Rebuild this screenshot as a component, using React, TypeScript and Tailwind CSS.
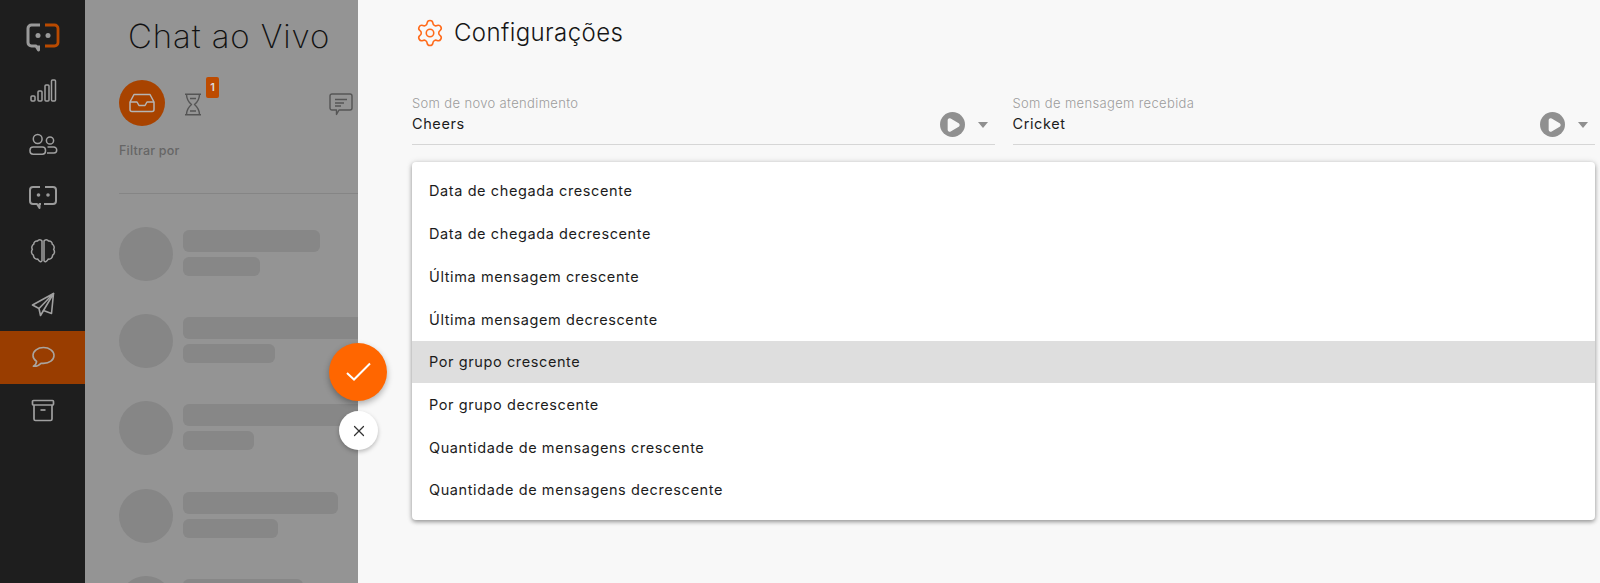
import { Settings, X, Play } from "lucide-react";

const font = "[font-family:Inter,'Liberation_Sans',sans-serif]";

const Logo = ({ color = "#9a9a9a", accent = "#b94a00" }: { color?: string; accent?: string }) => (
  <svg width="34" height="30" viewBox="0 0 34 30" fill="none">
    <path d="M14 2H5.5A3.5 3.5 0 0 0 2 5.5V19.5A3.5 3.5 0 0 0 5.5 23H10L12.5 27V22.5" stroke={color} strokeWidth="3" strokeLinejoin="round" />
    <path d="M19 2H28.5A3.5 3.5 0 0 1 32 5.5V19.5A3.5 3.5 0 0 1 28.5 23H19" stroke={accent} strokeWidth="2.8" />
    <circle cx="12" cy="12.5" r="2.5" fill={color} />
    <circle cx="22" cy="12.5" r="2.5" fill={color} />
  </svg>
);

const Signal = () => (
  <svg width="28" height="26" viewBox="0 0 28 26" fill="none" stroke="#a0a0a0" strokeWidth="1.5">
    <rect x="2" y="18" width="4" height="5" rx="1" />
    <rect x="9" y="13" width="4" height="10" rx="1" />
    <rect x="16" y="7" width="4" height="16" rx="1" />
    <rect x="22.5" y="2" width="4" height="21" rx="1" />
  </svg>
);

const People = () => (
  <svg width="30" height="24" viewBox="0 0 30 24" fill="none" stroke="#a0a0a0" strokeWidth="1.5">
    <circle cx="9.7" cy="7" r="4.4" />
    <rect x="2" y="15" width="15.5" height="7.2" rx="3.2" />
    <circle cx="22" cy="8.5" r="3.6" />
    <path d="M19.5 15H25.5A3 3 0 0 1 28.7 18C28.7 20 27.5 21 26 21H19" />
  </svg>
);

const Bot = () => (
  <svg width="30" height="25" viewBox="0 0 30 25" fill="none">
    <path d="M12 2H5A3 3 0 0 0 2 5V16A3 3 0 0 0 5 19H9L11.5 23V19H13" stroke="#9a9a9a" strokeWidth="2" strokeLinejoin="round" />
    <path d="M17 2H25A3 3 0 0 1 28 5V16A3 3 0 0 1 25 19H16" stroke="#9a9a9a" strokeWidth="2" />
    <circle cx="10.5" cy="10" r="1.8" fill="#9a9a9a" />
    <circle cx="20" cy="10" r="1.8" fill="#9a9a9a" />
  </svg>
);

const Brain = () => (
  <svg width="26" height="26" viewBox="0 0 26 26" fill="none" stroke="#a0a0a0" strokeWidth="1.5" strokeLinejoin="round">
    <path d="M12 3C11 1.3 8.5 1.3 7.5 3C5.5 2.6 3.6 4.2 3.8 6.2C1.8 7.3 1.3 9.7 2.4 11.3C.9 13.3 1.4 16 3.4 17.1C3.3 19.6 5.4 21.6 7.8 21.1C8.8 23.8 11.3 24.4 12 22.8V3Z" />
    <path d="M14 3C15 1.3 17.5 1.3 18.5 3C20.5 2.6 22.4 4.2 22.2 6.2C24.2 7.3 24.7 9.7 23.6 11.3C25.1 13.3 24.6 16 22.6 17.1C22.7 19.6 20.6 21.6 18.2 21.1C17.2 23.8 14.7 24.4 14 22.8V3Z" />
  </svg>
);

const Plane = () => (
  <svg width="24" height="25" viewBox="0 0 24 25" fill="none" stroke="#a0a0a0" strokeWidth="1.6" strokeLinejoin="round">
    <path d="M22.5 1.5L1.5 13L8 16.5L22.5 1.5Z" />
    <path d="M22.5 1.5L20.5 21.5L12.5 18.5L22.5 1.5Z" />
    <path d="M8 16.5L9.5 23.5L12.5 18.5" />
  </svg>
);

const Chat = () => (
  <svg width="24" height="22" viewBox="0 0 24 22" fill="none" stroke="#aaa49e" strokeWidth="1.6" strokeLinejoin="round">
    <path d="M12.5 1.5C6.7 1.5 2 5 2 9.5C2 12 3.5 14 5.6 15.4C5.5 17.2 4.3 19 2.4 20.2C5.5 20.5 8.3 19.2 10 17.2C10.8 17.3 11.7 17.4 12.5 17.4C18.3 17.4 23 13.9 23 9.5C23 5 18.3 1.5 12.5 1.5Z" />
  </svg>
);

const ArchiveBox = () => (
  <svg width="24" height="23" viewBox="0 0 24 23" fill="none" stroke="#a0a0a0" strokeWidth="1.7" strokeLinejoin="round">
    <rect x="1.5" y="1.5" width="21" height="4.5" rx="1" />
    <path d="M3 6V20A1.5 1.5 0 0 0 4.5 21.5H19.5A1.5 1.5 0 0 0 21 20V6" />
    <path d="M9.5 11H14.5" />
  </svg>
);

const Tray = () => (
  <svg width="26" height="20" viewBox="0 0 26 20" fill="none" stroke="#b5b5b5" strokeWidth="1.5" strokeLinejoin="round">
    <path d="M1 9L5 1.5H21L25 9V16.5A2 2 0 0 1 23 18.5H3A2 2 0 0 1 1 16.5V9Z" />
    <path d="M1 9H8L10 12.5H16L18 9H25" />
  </svg>
);

const Sand = () => (
  <svg width="18" height="23" viewBox="0 0 18 23" fill="none" stroke="#555" strokeWidth="1.4" strokeLinejoin="round">
    <path d="M1 1.2H17M1 21.8H17" strokeWidth="1.6" />
    <path d="M2.5 1.2C2.5 6 4 8.5 7.5 11.5C4 14.5 2.5 17 2.5 21.8M15.5 1.2C15.5 6 14 8.5 10.5 11.5C14 14.5 15.5 17 15.5 21.8" />
    <path d="M6 5.5H12M6 18H12" />
  </svg>
);

const Comment = () => (
  <svg width="24" height="23" viewBox="0 0 24 23" fill="none" stroke="#555" strokeWidth="1.4" strokeLinejoin="round">
    <path d="M3 1H21A2 2 0 0 1 23 3V15A2 2 0 0 1 21 17H10L7.5 21.5V17H3A2 2 0 0 1 1 15V3A2 2 0 0 1 3 1Z" />
    <path d="M6 6.5H18M6 10H15M6 13H12" />
  </svg>
);

const Tick = () => (
  <svg width="26" height="20" viewBox="0 0 26 20" fill="none" stroke="#fff" strokeWidth="2">
    <path d="M2 11L9 17.5L25 1.5" />
  </svg>
);

const nav = [
  { icon: <Logo /> },
  { icon: <Signal /> },
  { icon: <People /> },
  { icon: <Bot /> },
  { icon: <Brain /> },
  { icon: <Plane /> },
  { icon: <Chat />, active: true },
  { icon: <ArchiveBox /> },
];

const rows = [
  { a: "w-[137px]", b: "w-[77px]" },
  { a: "w-[190px]", b: "w-[92px]" },
  { a: "w-[190px]", b: "w-[71px]" },
  { a: "w-[155px]", b: "w-[95px]" },
  { a: "w-[120px]", b: "w-[70px]" },
];

const options = [
  "Data de chegada crescente",
  "Data de chegada decrescente",
  "Última mensagem crescente",
  "Última mensagem decrescente",
  "Por grupo crescente",
  "Por grupo decrescente",
  "Quantidade de mensagens crescente",
  "Quantidade de mensagens decrescente",
];

const Field = ({ label, value }: { label: string; value: string }) => (
  <div className="flex-1 h-[52px] border-b border-[#d6d6d6] relative">
    <div className="text-[13px] leading-[16px] pt-[2px] text-[#9c9c9c] tracking-[0.35px] font-light">{label}</div>
    <div className="text-[14.5px] leading-[20px] mt-[3px] text-[#1c1c1c] tracking-[0.6px]">{value}</div>
    <div className="absolute right-0 top-[19px] flex items-center gap-[13px] pr-[7px]">
      <span className="w-[25px] h-[25px] rounded-full bg-[#909090] flex items-center justify-center">
        <Play size={16} fill="#f8f8f8" stroke="#f8f8f8" className="ml-[2px]" />
      </span>
      <span className="w-0 h-0 border-x-[5.5px] border-x-transparent border-t-[6px] border-t-[#8f8f8f]" />
    </div>
  </div>
);

export default function App() {
  return (
    <div className={`relative flex h-[583px] w-[1600px] overflow-hidden bg-[#f8f8f8] ${font}`}>
      <aside className="w-[85px] shrink-0 bg-[#1e1e1e] pt-[11px] flex flex-col">
        {nav.map((n, i) => (
          <div
            key={i}
            className={`h-[53.3px] shrink-0 flex items-center justify-center ${n.active ? "bg-[#993d00]" : ""}`}
          >
            {n.icon}
          </div>
        ))}
      </aside>

      <section className="w-[273px] shrink-0 bg-[#949494] overflow-hidden pl-[34px]">
        <h1 className="pt-[17px] pl-[9px] text-[33px] leading-[38px] font-extralight text-[#111] tracking-[0.9px] whitespace-nowrap">
          Chat ao Vivo
        </h1>
        <div className="mt-[25px] flex items-center h-[45px] relative">
          <span className="w-[46px] h-[46px] rounded-full bg-[#a84300] flex items-center justify-center">
            <Tray />
          </span>
          <span className="ml-[19px] mt-[3px]">
            <Sand />
          </span>
          <span className="absolute left-[87px] top-[-3px] w-[13px] h-[21px] rounded-[2px] bg-[#bd4b00] text-[11px] font-semibold text-[#ddd] flex items-center justify-center">
            1
          </span>
          <span className="ml-[127px] mt-[3px]">
            <Comment />
          </span>
        </div>
        <div className="mt-[17px] text-[12.5px] leading-[18px] font-medium text-[#666] tracking-[0.2px]">Filtrar por</div>
        <div className="mt-[33px] h-px bg-[#858585]" />
        <div className="mt-[33px]">
          {rows.map((r, i) => (
            <div key={i} className="h-[87.2px] flex gap-[10px]">
              <span className="w-[54px] h-[54px] shrink-0 rounded-full bg-[#868686]" />
              <div className="pt-[3px]">
                <div className={`h-[22px] rounded-[6px] bg-[#878787] ${r.a}`} />
                <div className={`mt-[5px] h-[19px] rounded-[6px] bg-[#878787] ${r.b}`} />
              </div>
            </div>
          ))}
        </div>
      </section>

      <main className="flex-1 min-w-0 pl-[54px] pr-[5px] bg-[#f8f8f8]">
        <div className="pt-[18px] flex items-center gap-[9px]">
          <Settings size={30} strokeWidth={1.25} color="#ff6a1a" className="ml-[3px]" />
          <h2 className="text-[24px] leading-[26px] font-light text-[#161616] tracking-[0.4px]">Configurações</h2>
        </div>
        <div className="mt-[45px] flex gap-[18px]">
          <Field label="Som de novo atendimento" value="Cheers" />
          <Field label="Som de mensagem recebida" value="Cricket" />
        </div>
        <div className="mt-[17px] rounded-[4px] bg-white py-[8px] shadow-[0_2px_4px_rgba(0,0,0,.35),0_0_6px_rgba(0,0,0,.12)]">
          {options.map((o, i) => (
            <div
              key={o}
              className={`h-[42.7px] px-[17px] flex items-center text-[14.5px] text-[#1c1c1c] tracking-[0.6px] ${
                i === 4 ? "bg-[#dedede]" : ""
              }`}
            >
              {o}
            </div>
          ))}
        </div>
      </main>

      <button className="absolute left-[329px] top-[343px] w-[58px] h-[58px] rounded-full bg-[#ff6600] shadow-[0_3px_6px_rgba(0,0,0,.3)] flex items-center justify-center">
        <Tick />
      </button>
      <button className="absolute left-[339px] top-[411px] w-[39px] h-[39px] rounded-full bg-white shadow-[0_2px_4px_rgba(0,0,0,.25)] flex items-center justify-center">
        <X size={18} strokeWidth={1.6} color="#333" />
      </button>
    </div>
  );
}
